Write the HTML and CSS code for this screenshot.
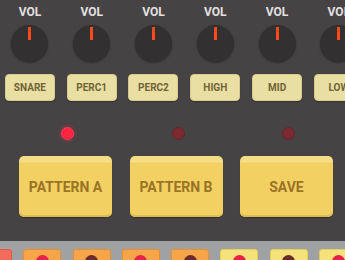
FILE: index.html
```html
<!DOCTYPE html>
<html lang="en">
<head>
    <meta charset="UTF-8">
    <meta name="viewport" content="width=device-width, initial-scale=1.0">
    <title>Drum Machine</title>
    <link rel="stylesheet" href="styles.css">
</head>
<body>
    <!-- channel strip -->
    <div class="channels">
        <div class="channel">
            <span class="vol">VOL</span>
            <div class="knob"></div>
            <button class="chan-btn">SNARE</button>
        </div>
        <div class="channel">
            <span class="vol">VOL</span>
            <div class="knob"></div>
            <button class="chan-btn">PERC1</button>
        </div>
        <div class="channel">
            <span class="vol">VOL</span>
            <div class="knob"></div>
            <button class="chan-btn">PERC2</button>
        </div>
        <div class="channel">
            <span class="vol">VOL</span>
            <div class="knob"></div>
            <button class="chan-btn">HIGH</button>
        </div>
        <div class="channel">
            <span class="vol">VOL</span>
            <div class="knob"></div>
            <button class="chan-btn">MID</button>
        </div>
        <div class="channel">
            <span class="vol">VOL</span>
            <div class="knob"></div>
            <button class="chan-btn">LOW</button>
        </div>
    </div>

    <!-- pattern leds -->
    <div class="leds">
        <span class="led on"></span>
        <span class="led"></span>
        <span class="led"></span>
    </div>

    <!-- pattern buttons -->
    <div class="patterns">
        <button class="pat-btn">PATTERN A</button>
        <button class="pat-btn">PATTERN B</button>
        <button class="pat-btn">SAVE</button>
    </div>

    <!-- step pads -->
    <div class="steps">
        <div class="pad red"><span class="dot"></span></div>
        <div class="pad orange"><span class="dot on"></span></div>
        <div class="pad orange"><span class="dot"></span></div>
        <div class="pad orange"><span class="dot on"></span></div>
        <div class="pad orange"><span class="dot"></span></div>
        <div class="pad yellow"><span class="dot on"></span></div>
        <div class="pad yellow"><span class="dot"></span></div>
        <div class="pad yellow"><span class="dot on"></span></div>
    </div>
</body>
</html>
```

FILE: styles.css
```css
/* Reset */
* {
    margin: 0;
    padding: 0;
    box-sizing: border-box;
}

body {
    font-family: Roboto, 'Liberation Sans', sans-serif;
    background-color: #464344;
    width: 345px;
    height: 260px;
    overflow: hidden;
}

/* channels */
.channels {
    display: grid;
    grid-template-columns: repeat(6, 61.8px);
    padding-top: 5px;
    margin-left: -1px;
    width: 380px;
}

.channel {
    display: flex;
    flex-direction: column;
    align-items: center;
}

.vol {
    font-size: 12px;
    line-height: 14px;
    font-weight: 700;
    color: #e2e0e0;
}

.knob {
    width: 37px;
    height: 37px;
    margin-top: 6px;
    border-radius: 50%;
    background: #323031;
    box-shadow: 0 1px 2px rgba(0, 0, 0, 0.35);
    display: flex;
    justify-content: center;
    padding-top: 2px;
}

.knob::before {
    content: "";
    width: 3px;
    height: 13px;
    background: #ff4a1e;
}

.chan-btn {
    width: 50px;
    height: 27px;
    margin-top: 12px;
    border: 1px solid #d8cb8c;
    border-radius: 4px;
    background: #eadfa3;
    box-shadow: 0 1px 1px rgba(0, 0, 0, 0.25);
    font-family: Roboto, 'Liberation Sans', sans-serif;
    font-size: 10px;
    font-weight: 700;
    color: #6f6336;
}

/* leds */
.leds {
    display: grid;
    grid-template-columns: repeat(3, 93px);
    column-gap: 17.5px;
    padding-left: 21px;
    margin-top: 26px;
    justify-items: center;
}

.led {
    width: 13px;
    height: 13px;
    border-radius: 50%;
    background: #7a2a30;
    border: 1px solid #6a2429;
}

.led.on {
    background: #ff2442;
    border-color: #ff3a55;
    box-shadow: 0 0 4px rgba(255, 40, 70, 0.6);
}

/* pattern buttons */
.patterns {
    display: grid;
    grid-template-columns: repeat(3, 93px);
    column-gap: 17.5px;
    padding-left: 19px;
    margin-top: 16px;
}

.pat-btn {
    height: 61px;
    border: none;
    border-radius: 5px;
    background: linear-gradient(#f5dc86 0, #f5dc86 6px, #f2d162 7px);
    box-shadow: inset 0 -2px 0 #dfbb52, 0 1px 1px rgba(0, 0, 0, 0.3);
    font-family: Roboto, 'Liberation Sans', sans-serif;
    font-size: 14px;
    font-weight: 700;
    color: #9a7326;
}

/* step pads */
.steps {
    display: flex;
    gap: 11.3px;
    margin-top: 24px;
    padding-top: 8px;
    margin-left: -26px;
    width: 400px;
    height: 30px;
    background: #9fa1a3;
}

.pad {
    width: 38px;
    height: 30px;
    flex-shrink: 0;
    border-radius: 3px;
    display: flex;
    justify-content: center;
    padding-top: 5px;
}

.pad.red {
    background: #f26b5b;
    border: 1px solid #e65848;
}

.pad.orange {
    background: #f8a54a;
    border: 1px solid #ea8f2e;
}

.pad.yellow {
    background: #f5e27a;
    border: 1px solid #e4cd5a;
}

.dot {
    width: 13px;
    height: 13px;
    border-radius: 50%;
    background: #6c2a2c;
}

.dot.on {
    background: #ea1f4a;
}
```
